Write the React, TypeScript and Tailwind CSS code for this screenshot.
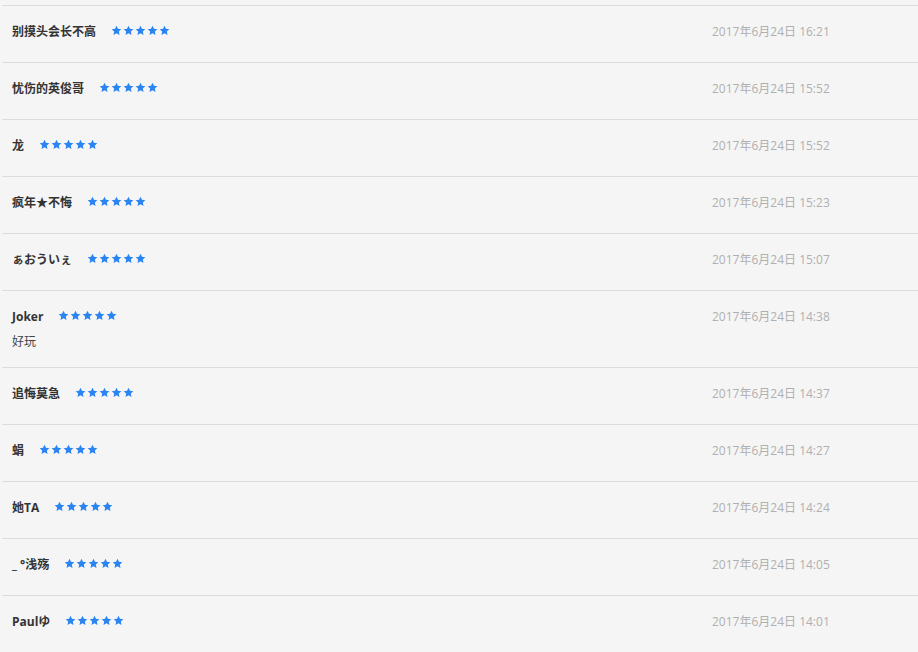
import { Fragment } from "react";

type Review = {
  user: string;
  time: string;
  comment?: string;
};

const reviews: Review[] = [
  { user: "别摸头会长不高", time: "2017年6月24日 16:21" },
  { user: "忧伤的英俊哥", time: "2017年6月24日 15:52" },
  { user: "龙", time: "2017年6月24日 15:52" },
  { user: "疯年★不悔", time: "2017年6月24日 15:23" },
  { user: "ぁおういぇ", time: "2017年6月24日 15:07" },
  { user: "Joker", time: "2017年6月24日 14:38", comment: "好玩" },
  { user: "追悔莫急", time: "2017年6月24日 14:37" },
  { user: "蜎", time: "2017年6月24日 14:27" },
  { user: "她TA", time: "2017年6月24日 14:24" },
  { user: "_ °浅殇", time: "2017年6月24日 14:05" },
  { user: "Paulゆ", time: "2017年6月24日 14:01" },
];

function Star() {
  return (
    <svg width="11" height="11" viewBox="0 0 24 24" className="fill-[#2a85f2]">
      <path d="M12 1.5l3.2 6.8 7.3.9-5.4 5.1 1.4 7.3L12 18l-6.5 3.6 1.4-7.3L1.5 9.2l7.3-.9z" />
    </svg>
  );
}

function Stars({ count = 5 }: { count?: number }) {
  return (
    <div className="flex items-center gap-[1px] -mt-[3px]">
      {Array.from({ length: count }).map((_, i) => (
        <Star key={i} />
      ))}
    </div>
  );
}

function ReviewRow({ review }: { review: Review }) {
  return (
    <div className="flex justify-between border-b border-[#dcdcdc] pl-[10px] pt-[17px] pb-[15px]">
      <div className="flex-1">
        <div className="flex items-center h-[18px]">
          <span className="font-bold text-[12px] leading-[18px] text-[#333]">{review.user}</span>
          <span className="ml-[15px]">
            <Stars />
          </span>
        </div>
        {review.comment ? (
          <div className="mt-[7px] mb-[1px] text-[12px] leading-[18px] text-[#444]">{review.comment}</div>
        ) : (
          <div className="h-[6px]" />
        )}
      </div>
      <div className="w-[206px] text-[12px] leading-[18px] text-[#b0b0b0]">{review.time}</div>
    </div>
  );
}

export default function App() {
  return (
    <div
      className="min-h-[652px] w-[918px] bg-[#f5f5f5] overflow-hidden"
      style={{ fontFamily: '"Open Sans", "Noto Sans CJK SC", sans-serif' }}
    >
      <div className="ml-[2px]">
        <div className="h-[6px] border-b border-[#dcdcdc]" />
        {reviews.map((r, i) => (
          <Fragment key={i}>
            <ReviewRow review={r} />
          </Fragment>
        ))}
      </div>
    </div>
  );
}
